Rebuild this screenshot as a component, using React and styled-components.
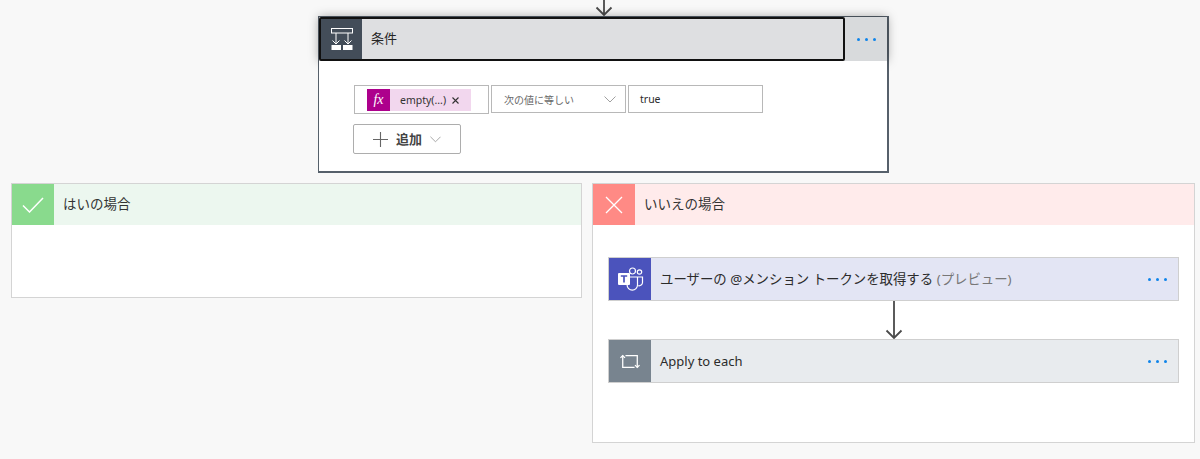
import React from "react";
import styled, { createGlobalStyle } from "styled-components";

const Global = createGlobalStyle`
  html, body { margin: 0; padding: 0; }
  body { background: #f8f8f8; font-family: "Noto Sans", "Noto Sans CJK JP", sans-serif; color: #2b2b2b; }
`;

const Page = styled.div`
  width: 1200px; height: 459px; overflow: hidden; background: #f8f8f8;
  display: flex; flex-direction: column;
`;
const TopFlow = styled.div`
  width: 571px; margin-left: 318px; display: flex; flex-direction: column; align-items: center;
`;
const TopArrow = styled.svg`
  display: block; width: 22px; height: 16px;
`;
const ConditionCard = styled.section`
  width: 571px; height: 157px; box-sizing: border-box; background: #fff;
  border: 2px solid #56606b; border-top-width: 1px; border-left-width: 1px;
  display: flex; flex-direction: column; align-self: stretch;
`;
const ConditionHeader = styled.header`
  height: 44px; display: flex; background: #d8dadc; flex: none;
  box-shadow: 0 0 10px rgba(0,0,0,.36);
`;
const Outlined = styled.div`
  width: 527px; box-sizing: border-box; border: 2px solid #111; border-radius: 2px;
  background: #dedfe1; display: flex; align-items: center;
`;
const IconTile = styled.div`
  width: ${p => p.$w || 42}px; flex: none; align-self: stretch; display: flex; align-items: center; justify-content: center;
  background: ${p => p.$bg};
`;
const CardTitle = styled.span`
  font-size: 13px; margin-left: 9px; padding-bottom: 3px; color: #252525;
`;
const Ellipsis = styled.button`
  border: 0; background: none; padding: 0; width: ${p => p.$w || 42}px; flex: none; align-self: stretch;
  display: flex; align-items: center; justify-content: center; gap: 5px;
`;
const Dot = styled.i`
  width: 3px; height: 3px; border-radius: 50%; background: #0f84ea; display: block;
`;
const ConditionBody = styled.div`
  position: relative; flex: 1; background: #fff;
  padding: 24px 0 0 34px; display: flex; flex-direction: column; align-items: flex-start; gap: 10px;
`;
const FieldRow = styled.div`
  display: flex; gap: 2px; margin-left: 1px; align-items: flex-start;
`;
const Field = styled.div`
  width: 135px; height: ${p => p.$h || 28}px; box-sizing: border-box; border: 1px solid #b8b8b8; background: #fff;
  display: flex; align-items: center; font-size: ${p => p.$size || 10.5}px; color: ${p => p.$muted ? "#6a6a6a" : "#2b2b2b"};
  padding: ${p => p.$pad || "0 0 0 11px"};
  justify-content: ${p => p.$between ? "space-between" : "flex-start"};
`;
const Token = styled.div`
  display: flex; height: 22px; width: 104px; background: #f2d7ee; align-items: center;
`;
const FxTile = styled.span`
  width: 23px; height: 22px; flex: none; background: #ad008c; color: #fff;
  font-family: "Liberation Serif", serif; font-style: italic; font-size: 14px;
  display: flex; align-items: center; justify-content: center;
`;
const TokenText = styled.span`
  font-size: 10.5px; margin-left: 10px; color: #333;
`;
const TokenClose = styled.svg`
  width: 7px; height: 7px; margin-left: 6px; margin-top: 1px;
`;
const AddButton = styled.button`
  width: 108px; height: 30px; box-sizing: border-box; border: 1px solid #adadad; border-radius: 2px; background: #fff;
  display: flex; align-items: center; padding: 0 0 0 19px; gap: 8px;
  font: 600 13px "Noto Sans CJK JP", sans-serif; color: #444;
`;
const AddLabel = styled.span`
  padding-bottom: 2px;
`;
const Branches = styled.div`
  display: flex; gap: 10px; margin: 10px 0 0 11px; align-items: flex-start;
`;
const Branch = styled.section`
  width: ${p => p.$w}px; height: ${p => p.$h}px; box-sizing: border-box; background: #fff;
  border: 1px solid #d4d4d4; display: flex; flex-direction: column;
`;
const BranchHeader = styled.header`
  height: 41px; flex: none; display: flex; align-items: center; background: ${p => p.$bg};
`;
const BranchTitle = styled.span`
  font-size: 13.5px; margin-left: 9px; padding-bottom: 3px; color: #333;
`;
const Actions = styled.div`
  padding: 32px 0 0 15px; display: flex; flex-direction: column; align-items: center; width: 571px;
`;
const Action = styled.div`
  width: 571px; height: 44px; box-sizing: border-box; border: 1px solid #cfcfcf; background: ${p => p.$bg};
  display: flex; align-items: center;
`;
const ActionTitle = styled.span`
  flex: 1; font-size: 13.4px; margin-left: 9px; padding-bottom: 2px; color: #2b2b2b; white-space: nowrap;
`;
const LatinTitle = styled(ActionTitle)`
  font-size: 13px; padding-bottom: 0;
`;
const Preview = styled.span`
  color: #777;
`;
const ActionArrow = styled.svg`
  display: block; width: 22px; height: 38px;
`;

const Dots = ({ w }) => (
  <Ellipsis $w={w} aria-label="more"><Dot /><Dot /><Dot /></Ellipsis>
);

const Chevron = ({ color = "#a0a0a0", w = 12 }) => (
  <svg width={w} height="7" viewBox="0 0 12 7" fill="none"><path d="M.5.5 6 6 11.5.5" stroke={color} strokeWidth="1" /></svg>
);

export default function App() {
  return (
    <Page>
      <Global />
      <TopFlow>
        <TopArrow viewBox="0 0 22 16" fill="none">
          <path d="M11 0v14.5M3.5 7.5 11 15l7.5-7.5" stroke="#4a4a4a" strokeWidth="1.8" />
        </TopArrow>
        <ConditionCard>
          <ConditionHeader>
            <Outlined>
              <IconTile $bg="#434d59" $w={41}>
                <svg width="22" height="22" viewBox="0 0 22 22" fill="none" stroke="#fff" strokeWidth="1">
                  <rect x="0.5" y="0.5" width="21" height="4.5" />
                  <path d="M5 5v11M17 5v11M1.5 12.5 5 16l3.5-3.5M13.5 12.5 17 16l3.500-3.500" />
                  <rect x="0.500" y="17" width="9.500" height="5" fill="#fff" stroke="none" />
                  <rect x="12" y="17" width="9.500" height="5" fill="#fff" stroke="none" />
                </svg>
              </IconTile>
              <CardTitle>条件</CardTitle>
            </Outlined>
            <Dots w={42} />
          </ConditionHeader>
          <ConditionBody>
            <FieldRow>
              <Field $h={29} $pad="0 0 0 12px">
                <Token>
                  <FxTile>fx</FxTile>
                  <TokenText>empty(...)</TokenText>
                  <TokenClose viewBox="0 0 7 7"><path d="M.5.5l6 6M6.500.5l-6 6" stroke="#333" strokeWidth="1.100" /></TokenClose>
                </Token>
              </Field>
              <Field $muted $between $size={10} $pad="0 9px 0 12px">
                次の値に等しい
                <Chevron />
              </Field>
              <Field>true</Field>
            </FieldRow>
            <AddButton>
              <svg width="15" height="15" viewBox="0 0 15 15"><path d="M7.500 0v15M0 7.500h15" stroke="#666" strokeWidth="1.100" /></svg>
              <AddLabel>追加</AddLabel>
              <Chevron w={11} />
            </AddButton>
          </ConditionBody>
        </ConditionCard>
      </TopFlow>
      <Branches>
        <Branch $w={571} $h={115}>
          <BranchHeader $bg="#ecf7ef">
            <IconTile $bg="#89da8d">
              <svg width="22" height="16" viewBox="0 0 22 16" fill="none"><path d="M1 8.500 7.500 15 21 1" stroke="#fff" strokeWidth="1.500" /></svg>
            </IconTile>
            <BranchTitle>はいの場合</BranchTitle>
          </BranchHeader>
        </Branch>
        <Branch $w={603} $h={260}>
          <BranchHeader $bg="#ffebeb">
            <IconTile $bg="#ff8a85">
              <svg width="18" height="18" viewBox="0 0 18 18" fill="none"><path d="M1 1l16 16M17 1 1 17" stroke="#fff" strokeWidth="1.300" /></svg>
            </IconTile>
            <BranchTitle>いいえの場合</BranchTitle>
          </BranchHeader>
          <Actions>
            <Action $bg="#e3e5f4">
              <IconTile $bg="#4b53bc">
                <svg width="27" height="24" viewBox="0 0 27 24" fill="none">
                  <circle cx="15.500" cy="4" r="3" stroke="#fff" strokeWidth="1.200" />
                  <circle cx="22.500" cy="5" r="2.200" stroke="#fff" strokeWidth="1.200" />
                  <path d="M10 10h10.500v8a5.200 5.200 0 0 1-10.400 0zM21 10h4.500v5.500a3.400 3.400 0 0 1-4.200 3.200" stroke="#fff" strokeWidth="1.200" />
                  <rect x="1" y="6" width="12" height="12" rx="1" fill="#fff" />
                  <path d="M3.800 9h6.400M7 9v6.500" stroke="#4b53bc" strokeWidth="1.700" />
                </svg>
              </IconTile>
              <ActionTitle>ユーザーの @メンション トークンを取得する <Preview>(プレビュー)</Preview></ActionTitle>
              <Dots w={42} />
            </Action>
            <ActionArrow viewBox="0 0 22 38" fill="none">
              <path d="M11 0v37M3.500 29.500 11 37l7.500-7.500" stroke="#4a4a4a" strokeWidth="1.800" />
            </ActionArrow>
            <Action $bg="#e8ebee">
              <IconTile $bg="#78848f">
                <svg width="20" height="15" viewBox="0 0 22 16" fill="none" stroke="#fff" strokeWidth="1.400">
                  <path d="M3 1.500V14.500H16" />
                  <path d="M.5 4 3 1.500 5.500 4" />
                  <path d="M6 1.500H19V14.500" />
                  <path d="M16.500 12 19 14.500 21.500 12" />
                </svg>
              </IconTile>
              <LatinTitle>Apply to each</LatinTitle>
              <Dots w={42} />
            </Action>
          </Actions>
        </Branch>
      </Branches>
    </Page>
  );
}
